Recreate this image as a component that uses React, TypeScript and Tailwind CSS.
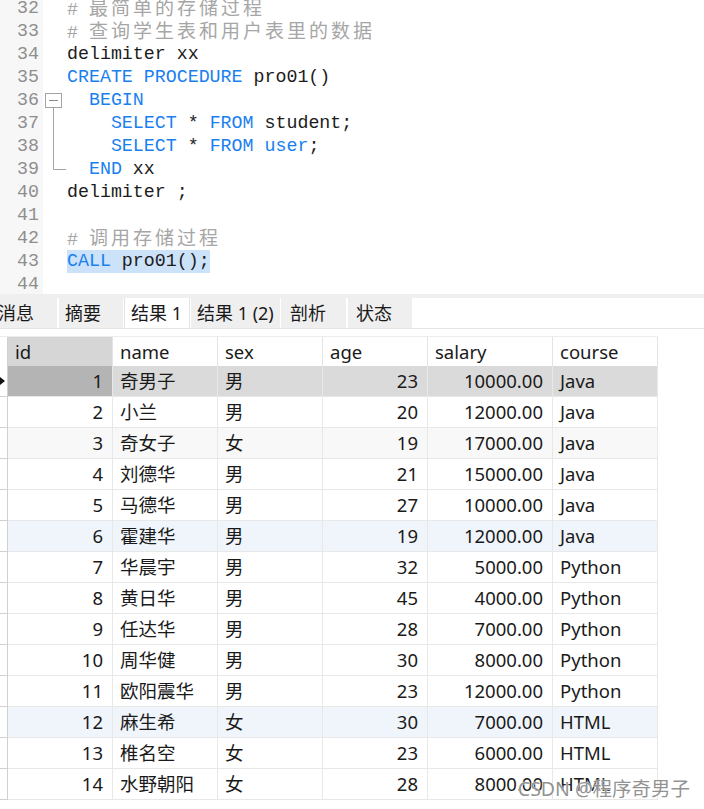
import React from "react";

type Seg = { t: string; k: "kw" | "tx" | "cm" | "cj" | "hl" };

const mono = { fontFamily: '"Liberation Mono", "DejaVu Sans Mono", monospace' };

const lines: { n: number; segs: Seg[] }[] = [
  { n: 32, segs: [{ t: "# ", k: "cm" }, { t: "最简单的存储过程", k: "cj" }] },
  { n: 33, segs: [{ t: "# ", k: "cm" }, { t: "查询学生表和用户表里的数据", k: "cj" }] },
  { n: 34, segs: [{ t: "delimiter xx", k: "tx" }] },
  { n: 35, segs: [{ t: "CREATE PROCEDURE", k: "kw" }, { t: " pro01()", k: "tx" }] },
  { n: 36, segs: [{ t: "  ", k: "tx" }, { t: "BEGIN", k: "kw" }] },
  { n: 37, segs: [{ t: "    ", k: "tx" }, { t: "SELECT", k: "kw" }, { t: " * ", k: "tx" }, { t: "FROM", k: "kw" }, { t: " student;", k: "tx" }] },
  { n: 38, segs: [{ t: "    ", k: "tx" }, { t: "SELECT", k: "kw" }, { t: " * ", k: "tx" }, { t: "FROM", k: "kw" }, { t: " ", k: "tx" }, { t: "user", k: "kw" }, { t: ";", k: "tx" }] },
  { n: 39, segs: [{ t: "  ", k: "tx" }, { t: "END", k: "kw" }, { t: " xx", k: "tx" }] },
  { n: 40, segs: [{ t: "delimiter ;", k: "tx" }] },
  { n: 41, segs: [] },
  { n: 42, segs: [{ t: "# ", k: "cm" }, { t: "调用存储过程", k: "cj" }] },
  { n: 43, segs: [{ t: "CALL", k: "hl" }] },
  { n: 44, segs: [] },
];

const rows: [number, string, string, number, string, string][] = [
  [1, "奇男子", "男", 23, "10000.00", "Java"],
  [2, "小兰", "男", 20, "12000.00", "Java"],
  [3, "奇女子", "女", 19, "17000.00", "Java"],
  [4, "刘德华", "男", 21, "15000.00", "Java"],
  [5, "马德华", "男", 27, "10000.00", "Java"],
  [6, "霍建华", "男", 19, "12000.00", "Java"],
  [7, "华晨宇", "男", 32, "5000.00", "Python"],
  [8, "黄日华", "男", 45, "4000.00", "Python"],
  [9, "任达华", "男", 28, "7000.00", "Python"],
  [10, "周华健", "男", 30, "8000.00", "Python"],
  [11, "欧阳震华", "男", 23, "12000.00", "Python"],
  [12, "麻生希", "女", 30, "7000.00", "HTML"],
  [13, "椎名空", "女", 23, "6000.00", "HTML"],
  [14, "水野朝阳", "女", 28, "8000.00", "HTML"],
];

function CodeLine({ n, segs }: { n: number; segs: Seg[] }) {
  return (
    <div className="flex h-[23px] items-center leading-[23px]">
      <div className="w-[43px] h-[23px] shrink-0 bg-[#f7f7f7] pr-[4px] text-right text-[#8e8e8e] text-[18.3px]" style={mono}>
        {n}
      </div>
      <div className="w-[24px] shrink-0" />
      <div className="whitespace-pre text-[18.3px] text-[#1c1c1c]" style={mono}>
        {segs.map((s, i) => {
          if (s.k === "kw") return <span key={i} className="text-[#1a7ff0]">{s.t}</span>;
          if (s.k === "cm") return <span key={i} className="text-[#a6a6a6]">{s.t}</span>;
          if (s.k === "cj")
            return (
              <span
                key={i}
                className="text-[#a6a6a6] text-[19px] tracking-[3px]"
                style={{ fontFamily: '"Noto Sans CJK SC", sans-serif' }}
              >
                {s.t}
              </span>
            );
          if (s.k === "hl")
            return (
              <span key={i} className="inline-block h-[23px] leading-[23px] bg-[#cce2f8]">
                <span className="text-[#1a7ff0]">CALL</span>
                <span> pro01();</span>
              </span>
            );
          return <span key={i}>{s.t}</span>;
        })}
      </div>
    </div>
  );
}

const sans = { fontFamily: '"Noto Sans", "Noto Sans CJK SC", sans-serif' };

const cols = [
  { w: "w-[105px]", label: "id", right: true },
  { w: "w-[105px]", label: "name", right: false },
  { w: "w-[105px]", label: "sex", right: false },
  { w: "w-[105px]", label: "age", right: true },
  { w: "w-[125px]", label: "salary", right: true },
  { w: "w-[105px]", label: "course", right: false },
];

export default function App() {
  return (
    <div className="relative w-[704px] h-[809px] overflow-hidden bg-white text-[#1a1a1a]" style={sans}>
      {/* Editor */}
      <div className="relative h-[294px] overflow-hidden bg-white">
        <div className="mt-[-3px]">
          {lines.map((l) => (
            <CodeLine key={l.n} n={l.n} segs={l.segs} />
          ))}
        </div>
        <svg className="absolute left-[43px] top-0" width="24" height="294" viewBox="0 0 24 294">
          <rect x="2.5" y="93.5" width="16" height="14" fill="#fff" stroke="#a3a3a3" />
          <line x1="6" y1="100.5" x2="15" y2="100.5" stroke="#8a8a8a" />
          <path d="M10.5 108 V169.5 H23" fill="none" stroke="#a3a3a3" />
        </svg>
      </div>
      <div className="h-[4px] bg-[#efefef]" />

      {/* Tabs */}
      <div className="flex h-[30px] items-stretch text-[18px] leading-[30px] text-[#1a1a1a]">
        <div className="w-[57px] bg-[#efefef] pl-0"><span className="ml-[-2px]">消息</span></div>
        <div className="ml-[2px] w-[64px] bg-[#efefef] pl-[6px]">摘要</div>
        <div className="ml-[1px] w-[66px] bg-white border-l border-r border-[#e2e2e2] pl-[6px]">结果 1</div>
        <div className="ml-[1px] w-[89px] bg-[#efefef] pl-[6px]">结果 1 (2)</div>
        <div className="ml-[1px] w-[65px] bg-[#efefef] pl-[9px]">剖析</div>
        <div className="ml-[2px] w-[64px] bg-[#efefef] pl-[8px]">状态</div>
      </div>
      <div className="h-[1px] bg-[#e4e4e4]" />
      <div className="h-[7px]" />

      {/* Table */}
      <div className="w-[658px] text-[18.5px]">
        {/* header */}
        <div className="flex h-[30px] border-t border-[#ececec]">
          <div className="w-[8px] shrink-0 border-r border-[#d0d0d0]" />
          {cols.map((c, i) => (
            <div
              key={c.label}
              className={`${c.w} shrink-0 flex items-center pl-[7px] border-r border-[#e4e4e4] ${i === 0 ? "bg-[#d6d6d6]" : "bg-white"}`}
            >
              {c.label}
            </div>
          ))}
        </div>
        {rows.map((r, ri) => {
          const sel = ri === 0;
          const bg = sel
            ? "bg-[#dadada]"
            : ri === 2
            ? "bg-[#f8f8f8]"
            : ri === 5 || ri === 11
            ? "bg-[#f0f5fc]"
            : "bg-white";
          return (
            <div key={r[0]} className="flex h-[31px]">
              <div className="relative w-[8px] shrink-0 border-r border-b border-[#d0d0d0] bg-white">
                {sel && (
                  <svg className="absolute left-0 top-[11px]" width="6" height="8" viewBox="0 0 6 8">
                    <path d="M0 0 L5 4 L0 8 Z" fill="#111" />
                  </svg>
                )}
              </div>
              {r.map((v, ci) => {
                const c = cols[ci];
                return (
                  <div
                    key={ci}
                    className={`${c.w} shrink-0 flex items-center border-r border-b border-[#e8e8e8] ${
                      c.right ? "justify-end pr-[9px]" : "pl-[7px]"
                    } ${sel && ci === 0 ? "bg-[#b4b4b4]" : bg}`}
                  >
                    {v}
                  </div>
                );
              })}
            </div>
          );
        })}
      </div>

      {/* watermark */}
      <div
        className="absolute right-[14px] top-[776px] text-[19.5px] leading-[26px] text-[rgba(110,110,110,0.75)]"
        style={{ ...sans, textShadow: "0 0 2px #fff, 0 0 1px #fff" }}
      >
        CSDN @程序奇男子
      </div>
    </div>
  );
}
